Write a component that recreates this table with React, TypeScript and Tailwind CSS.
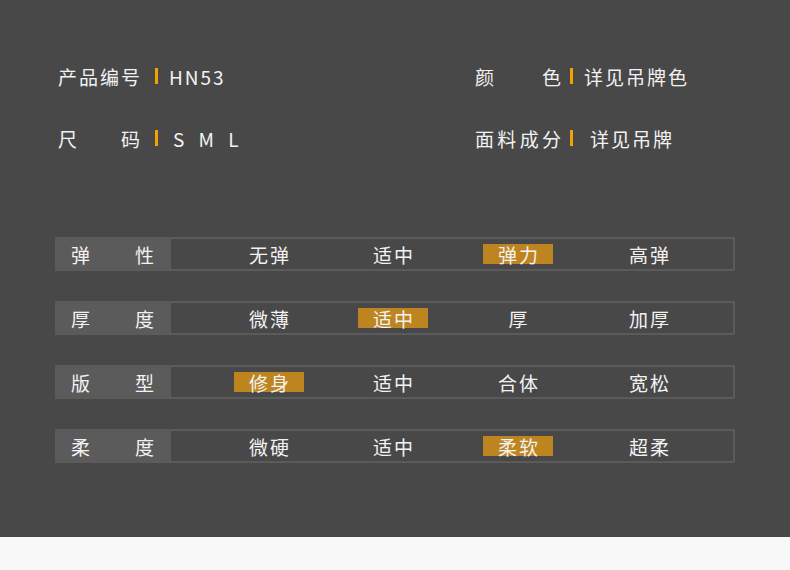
const info = [
  { left: ['产', '品', '编', '号'], leftValue: 'HN53', leftPad: 'ml-[11px]', right: ['颜', '色'], rightValue: '详见吊牌色', rightPad: 'ml-[11px]' },
  { left: ['尺', '码'], leftValue: 'S M L', leftPad: 'ml-[15px]', right: ['面', '料', '成', '分'], rightValue: '详见吊牌', rightPad: 'ml-[17px]' },
];

const rows = [
  { label: ['弹', '性'], options: ['无弹', '适中', '弹力', '高弹'], active: 2 },
  { label: ['厚', '度'], options: ['微薄', '适中', '厚', '加厚'], active: 1 },
  { label: ['版', '型'], options: ['修身', '适中', '合体', '宽松'], active: 0 },
  { label: ['柔', '度'], options: ['微硬', '适中', '柔软', '超柔'], active: 2 },
];

function Bar() {
  return <span className="block h-[16px] w-[3px] bg-[#f5a100]" />;
}

export default function App() {
  return (
    <div className="w-[790px] h-[570px] bg-[#f8f8f8] font-['Noto_Sans_CJK_SC','Noto_Sans',sans-serif] text-[#f2f2f2]">
      <div className="h-[537px] bg-[#484848] pt-[61px]">
        <div className="flex flex-col gap-[32px]">
          {info.map((r, i) => (
            <div key={i} className="flex h-[30px] items-center text-[19px] leading-none">
              <div className="flex w-[475px] items-center pl-[58px]">
                <div className="flex w-[82px] justify-between">
                  {r.left.map((c) => (
                    <span key={c}>{c}</span>
                  ))}
                </div>
                <span className="ml-[15px]">
                  <Bar />
                </span>
                <span className={`${r.leftPad} ${i === 1 ? 'tracking-[5px]' : 'tracking-[2px]'}`}>{r.leftValue}</span>
              </div>
              <div className="flex items-center">
                <div className="flex w-[86px] justify-between">
                  {r.right.map((c) => (
                    <span key={c}>{c}</span>
                  ))}
                </div>
                <span className="ml-[9px]">
                  <Bar />
                </span>
                <span className={`${r.rightPad} tracking-[2px]`}>{r.rightValue}</span>
              </div>
            </div>
          ))}
        </div>

        <div className="mt-[84px] flex flex-col gap-[30px] px-[55px]">
          {rows.map((row) => (
            <div key={row.label[0]} className="flex h-[34px] w-[680px] border-2 border-[#5b5b5b] text-[19px] leading-none">
              <div className="-my-[2px] -ml-[2px] flex w-[116px] items-center justify-between bg-[#5b5b5b] pl-[16px] pr-[17px]">
                <span>{row.label[0]}</span>
                <span>{row.label[1]}</span>
              </div>
              <div className="ml-[35px] grid grid-cols-[126px_122px_128px_134px] items-center">
                {row.options.map((o, j) => (
                  <div key={o} className="flex justify-center">
                    <span
                      className={
                        j === row.active
                          ? 'flex h-[20px] w-[70px] items-center justify-center bg-[#bd8420] pl-[2px] tracking-[2px]'
                          : 'pl-[2px] tracking-[2px]'
                      }
                    >
                      {o}
                    </span>
                  </div>
                ))}
              </div>
            </div>
          ))}
        </div>
      </div>
    </div>
  );
}
